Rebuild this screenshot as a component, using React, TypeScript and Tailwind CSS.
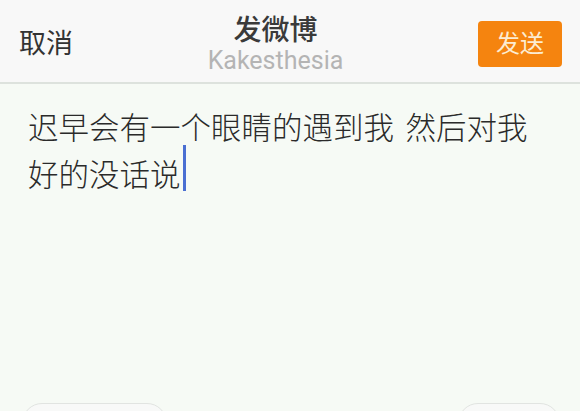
import React from "react";

export default function App() {
  return (
    <div
      className="w-[580px] h-[411px] overflow-hidden flex flex-col bg-[#f6faf5]"
      style={{ fontFamily: 'Roboto, "Noto Sans CJK SC", sans-serif' }}
    >
      {/* Header */}
      <div className="h-[84px] shrink-0 bg-[#f8f8f8] border-b-2 border-[#dde2dd] flex items-center justify-between pl-[19px] pr-[18px] pt-[6px]">
        <button className="text-[27px] leading-none text-[#333]">取消</button>
        <div className="flex flex-col items-center">
          <div className="text-[28px] leading-[34px] font-medium text-[#3a3a3a]">发微博</div>
          <div className="text-[25px] leading-[26px] text-[#b4b4b4]">Kakesthesia</div>
        </div>
        <button className="w-[84px] h-[46px] rounded-[4px] bg-[#f5840f] text-[24px] leading-none text-[#fcecd2]">
          发送
        </button>
      </div>

      {/* Body */}
      <div className="flex-1 pl-[28px] pt-[21px]">
        <p className="w-[515px] text-[30.5px] leading-[47px] text-[#2a2a2a] font-light [word-spacing:4px]">
          迟早会有一个眼睛的遇到我 然后对我好的没话说
          <span className="relative -top-[7px] inline-block w-[3px] h-[46px] ml-[2px] align-top bg-[#4a6fd2]" />
        </p>
      </div>

      {/* Bottom toolbar */}
      <div className="h-[8px] shrink-0 flex items-start justify-between pl-[22px] pr-[20px]">
        <div className="w-[145px] h-[40px] shrink-0 rounded-full border border-[#e1e4e1] bg-[#f8f9f8]" />
        <div className="w-[102px] h-[40px] shrink-0 rounded-full border border-[#e1e4e1] bg-[#f8f9f8]" />
      </div>
    </div>
  );
}
